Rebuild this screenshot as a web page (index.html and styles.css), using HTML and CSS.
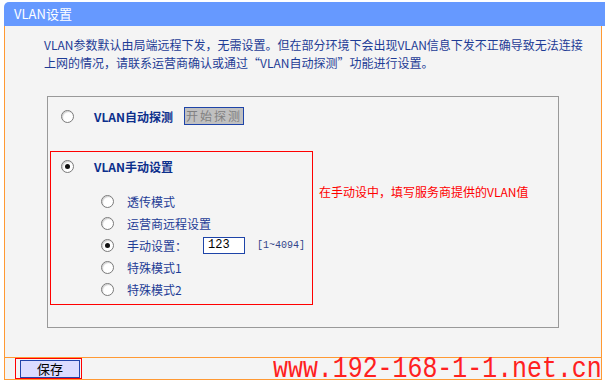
FILE: index.html
```html
<!DOCTYPE html>
<html lang="zh-CN">
<head>
<meta charset="utf-8">
<title>VLAN设置</title>
<link rel="stylesheet" href="styles.css">
</head>
<body>
<div class="page">
  <div class="header">VLAN设置</div>
  <div class="content">
    <p class="intro">VLAN参数默认由局端远程下发，无需设置。但在部分环境下会出现VLAN信息下发不正确导致无法连接<br>上网的情况，请联系运营商确认或通过“VLAN自动探测”功能进行设置。</p>
    <div class="panel">
      <div class="row auto">
        <span class="radio"></span>
        <span class="opt-title">VLAN自动探测</span>
        <button class="probe" type="button">开始探测</button>
      </div>
      <div class="manual-wrap">
        <div class="manual">
          <div class="row manual-head">
            <span class="radio checked"></span>
            <span class="opt-title">VLAN手动设置</span>
          </div>
          <ul class="sub">
            <li class="sub-row"><span class="radio"></span><span class="sub-label">透传模式</span></li>
            <li class="sub-row"><span class="radio"></span><span class="sub-label">运营商远程设置</span></li>
            <li class="sub-row"><span class="radio checked"></span><span class="sub-label">手动设置：</span><input class="vlan-input" type="text" value="123"><span class="range">[1~4094]</span></li>
            <li class="sub-row"><span class="radio"></span><span class="sub-label">特殊模式1</span></li>
            <li class="sub-row"><span class="radio"></span><span class="sub-label">特殊模式2</span></li>
          </ul>
        </div>
        <div class="note">在手动设中，填写服务商提供的VLAN值</div>
      </div>
    </div>
  </div>
  <div class="footer">
    <div class="save-wrap"><button class="save" type="button">保存</button></div>
  </div>
  <div class="watermark">www.192-168-1-1.net.cn</div>
</div>
</body>
</html>
```
FILE: styles.css
```css
body {
  margin: 0;
  background: #ffffff;
  font-family: "Noto Sans CJK SC", "Liberation Sans", sans-serif;
  font-size: 12px;
}

.page {
  position: relative;
  margin: 2px 0 0 4px;
  width: 601px;
}

.header {
  height: 24px;
  background: #6699ff;
  border-top-left-radius: 5px;
  color: #ffffff;
  font-size: 13px;
  line-height: 24px;
  padding-left: 10px;
}

.content {
  width: 598px;
  height: 331px;
  box-sizing: border-box;
  background: #f4f4f4;
  border-left: 1px solid #ff9933;
  border-right: 1px solid #ff9933;
  padding: 10px 0 0 39px;
}

.intro {
  margin: 0;
  line-height: 18px;
  color: #1e3c96;
  white-space: nowrap;
}

.panel {
  margin: 24px 0 0 3px;
  width: 512px;
  height: 232px;
  box-sizing: border-box;
  border: 1px solid #999999;
}

.row {
  display: flex;
  align-items: center;
  height: 20px;
}

.auto {
  margin-top: 9px;
  padding-left: 13px;
}

.radio {
  flex: none;
  position: relative;
  width: 13px;
  height: 13px;
  box-sizing: border-box;
  border-radius: 50%;
  border: 1px solid #7a7a7a;
  background: #ffffff;
  box-shadow: inset 1px 1px 1px #d0d0d0;
}

.radio.checked::after {
  content: "";
  position: absolute;
  left: 3px;
  top: 3px;
  width: 5px;
  height: 5px;
  border-radius: 50%;
  background: #111111;
}

.opt-title {
  margin-left: 20px;
  font-weight: bold;
  color: #0c2f8c;
}

.probe {
  margin-left: 11px;
  width: 60px;
  height: 18px;
  padding: 0;
  background: #c0c0c0;
  border: 1px solid #1e44a8;
  color: #808080;
  font-family: inherit;
  font-size: 12px;
  letter-spacing: 2px;
  line-height: 16px;
}

.manual-wrap {
  display: flex;
  align-items: flex-start;
  margin: 25px 0 0 2px;
}

.manual {
  width: 263px;
  height: 154px;
  box-sizing: border-box;
  border: 1px solid #ff0000;
}

.manual-head {
  margin-top: 4px;
  padding-left: 10px;
}

.sub {
  list-style: none;
  margin: 14px 0 0;
  padding: 0 0 0 50px;
}

.sub-row {
  display: flex;
  align-items: center;
  height: 22px;
}

.sub-label {
  margin-left: 13px;
  color: #1e3c96;
}

.vlan-input {
  margin-left: 16px;
  width: 42px;
  height: 17px;
  box-sizing: border-box;
  border: 1px solid #1e44a8;
  background: #ffffff;
  padding: 0 0 0 4px;
  font-family: "Liberation Mono", monospace;
  font-size: 12px;
  color: #000000;
}

.range {
  margin-left: 12px;
  font-family: "Liberation Mono", monospace;
  font-size: 10px;
  color: #33448a;
}

.note {
  margin: 34px 0 0 6px;
  color: #ff0000;
  line-height: 14px;
  white-space: nowrap;
}

.footer {
  width: 598px;
  height: 23px;
  box-sizing: border-box;
  background: #f4f4f4;
  border: 1px solid #ff9933;
  padding-left: 10px;
}

.save-wrap {
  width: 67px;
  height: 21px;
  box-sizing: border-box;
  border: 1px solid #ff0000;
  padding: 1px 0 0 4px;
}

.save {
  display: block;
  width: 60px;
  height: 18px;
  padding: 0;
  background: #dcdcff;
  border: 1px solid #2244aa;
  color: #000000;
  font-family: inherit;
  font-size: 13px;
  line-height: 16px;
}

.watermark {
  position: absolute;
  left: 269px;
  top: 352px;
  font-family: "Liberation Mono", monospace;
  font-size: 30px;
  line-height: 30px;
  color: #ff2020;
  white-space: nowrap;
  transform: scaleX(0.83);
  transform-origin: left top;
}
```
